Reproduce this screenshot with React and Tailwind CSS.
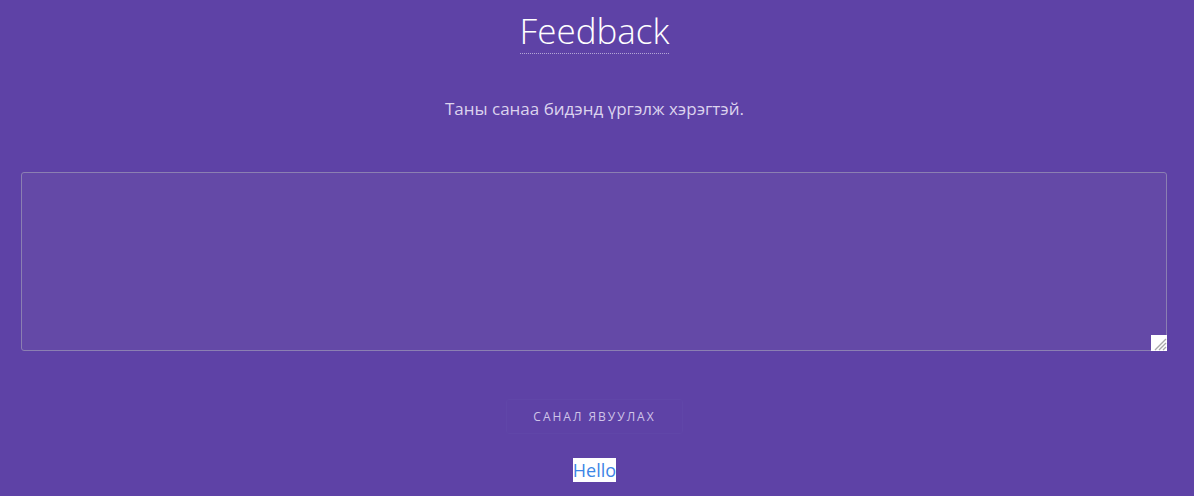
import React, { useState } from "react";

export default function App() {
    const [text, setText] = useState("");

    return (
        <div
            className="w-[1194px] h-[496px] overflow-hidden bg-[#5e42a6] flex flex-col items-center pr-[5px]"
            style={{ fontFamily: '"Source Sans Pro", "Open Sans", "Noto Sans", sans-serif' }}>
            <h2 className="mt-[9px] text-[35px] leading-[43px] font-light text-white border-b border-dotted border-[#b3a6d6] pb-[1px]">
                Feedback
            </h2>

            <p className="mt-[43px] text-[17px] leading-[24px] text-[#dcd3ee]">
                Таны санаа бидэнд үргэлж хэрэгтэй.
            </p>

            <div className="mt-[51px] w-full pl-[21px] pr-[22px]">
                <div className="relative">
                    <textarea
                        value={text}
                        onChange={(e) => setText(e.target.value)}
                        className="block w-full h-[179px] resize-none rounded-[3px] border border-[#8b7fb2] bg-[#6449a7] text-white p-3 outline-none"
                    />
                    {/* resize grip */}
                    <svg
                        className="absolute right-0 bottom-0 w-[16px] h-[16px] pointer-events-none"
                        viewBox="0 0 16 16">
                        <rect x="0" y="0" width="16" height="16" fill="#ffffff" />
                        <path d="M15 4 L4 15 M15 8 L8 15 M15 12 L12 15" stroke="#a9a9a9" strokeWidth="1.4" />
                    </svg>
                </div>
            </div>

            <button
                type="button"
                className="mt-[48px] w-[177px] h-[35px] rounded-[3px] border border-[#6046a8] text-[12px] tracking-[2px] text-[#cfc4e8]">
                САНАЛ ЯВУУЛАХ
            </button>

            <span className="mt-[24px] bg-white text-[#3d86e6] text-[18px] leading-[24px]">
                Hello
            </span>
        </div>
    );
}
